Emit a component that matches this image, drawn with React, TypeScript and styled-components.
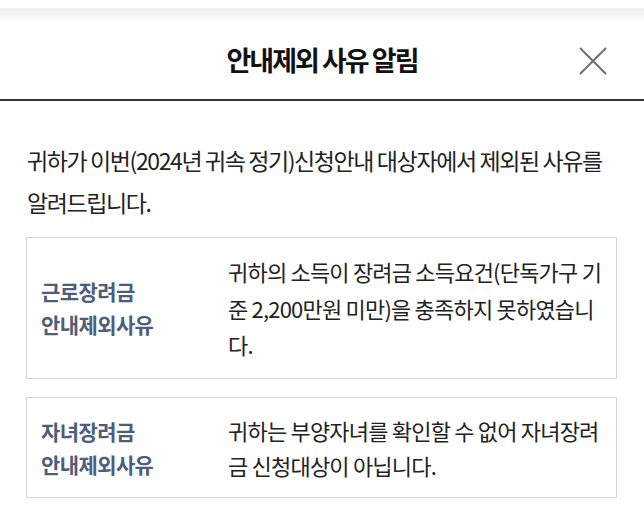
import styled, { createGlobalStyle } from "styled-components";

const GlobalStyle = createGlobalStyle`
  html, body {
    margin: 0;
    padding: 0;
    background: #ffffff;
  }
  body {
    font-family: "Noto Sans CJK KR", "Noto Sans", sans-serif;
    color: #222222;
  }
`;

const Page = styled.div`
  width: 644px;
  height: 511px;
  overflow: hidden;
  background: #ffffff;
`;

const TopShade = styled.div`
  height: 22px;
  background: linear-gradient(
    to bottom,
    #ffffff 0px,
    #ffffff 7px,
    #efefef 9px,
    #f6f6f6 16px,
    #ffffff 22px
  );
`;

const Header = styled.header`
  position: relative;
  height: 77px;
  display: flex;
  align-items: center;
  justify-content: center;
  border-bottom: 2px solid #333333;
`;

const Title = styled.h1`
  margin: 0;
  font-size: 27px;
  font-weight: 700;
  letter-spacing: -2px;
  color: #111111;
  line-height: 1;
  padding-bottom: 3px;
`;

const CloseButton = styled.button`
  position: absolute;
  right: 36px;
  top: 24px;
  width: 30px;
  height: 30px;
  padding: 0;
  border: none;
  background: transparent;
  display: flex;
  align-items: center;
  justify-content: center;
`;

const Body = styled.main`
  padding: 38px 27px 0 26px;
`;

const Intro = styled.p`
  margin: 0 0 14px 1px;
  font-size: 23px;
  line-height: 42px;
  letter-spacing: -1.4px;
  white-space: nowrap;
  color: #222222;
`;

const ReasonList = styled.div`
  display: flex;
  flex-direction: column;
  gap: 18px;
`;

const ReasonBox = styled.section`
  display: flex;
  align-items: center;
  border: 1px solid #d6d6d6;
  padding: 15px 10px 15px 14px;
`;

const ReasonLabel = styled.h2`
  margin: 0;
  width: 187px;
  flex-shrink: 0;
  font-size: 21px;
  font-weight: 600;
  line-height: 33px;
  letter-spacing: -0.6px;
  color: #4e5d7b;
`;

const ReasonText = styled.p<{ $lineHeight: number }>`
  margin: 0;
  flex: 1;
  font-size: 22px;
  line-height: ${(p) => p.$lineHeight}px;
  letter-spacing: -0.8px;
  word-break: break-all;
  color: #222222;
`;

const reasons = [
  {
    title: ["근로장려금", "안내제외사유"],
    text: "귀하의 소득이 장려금 소득요건(단독가구 기준 2,200만원 미만)을 충족하지 못하였습니다.",
    lineHeight: 36.7,
  },
  {
    title: ["자녀장려금", "안내제외사유"],
    text: "귀하는 부양자녀를 확인할 수 없어 자녀장려금 신청대상이 아닙니다.",
    lineHeight: 34.5,
  },
];

export default function App() {
  return (
    <Page>
      <GlobalStyle />
      <TopShade />
      <Header>
        <Title>안내제외 사유 알림</Title>
        <CloseButton aria-label="닫기">
          <svg width="28" height="28" viewBox="0 0 28 28">
            <path
              d="M1 1 L27 27 M27 1 L1 27"
              stroke="#6f6f6f"
              strokeWidth="2"
              fill="none"
            />
          </svg>
        </CloseButton>
      </Header>
      <Body>
        <Intro>
          귀하가 이번(2024년 귀속 정기)신청안내 대상자에서 제외된 사유를
          <br />
          알려드립니다.
        </Intro>
        <ReasonList>
          {reasons.map((r) => (
            <ReasonBox key={r.title[0]}>
              <ReasonLabel>
                {r.title[0]}
                <br />
                {r.title[1]}
              </ReasonLabel>
              <ReasonText $lineHeight={r.lineHeight}>{r.text}</ReasonText>
            </ReasonBox>
          ))}
        </ReasonList>
      </Body>
    </Page>
  );
}
